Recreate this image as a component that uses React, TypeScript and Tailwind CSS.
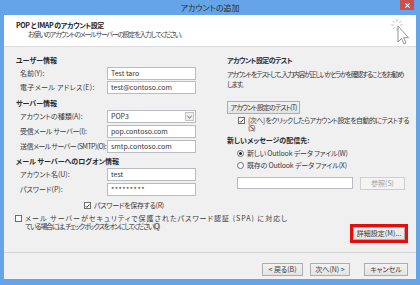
import React from "react";

function Check() {
  return (
    <svg viewBox="0 0 8 8" className="w-[6px] h-[6px]">
      <path d="M1 4.2 L3 6.2 L7 1.5" fill="none" stroke="#222" strokeWidth="1.4" />
    </svg>
  );
}

function CheckBox({ checked }: { checked?: boolean }) {
  return (
    <span className="w-[7px] h-[7px] border border-[#6d6d6d] bg-white flex items-center justify-center shrink-0">
      {checked && <Check />}
    </span>
  );
}

function Radio({ checked }: { checked?: boolean }) {
  return (
    <span className="w-[7px] h-[7px] rounded-full border border-[#6d6d6d] bg-white flex items-center justify-center shrink-0">
      {checked && <span className="w-[3px] h-[3px] rounded-full bg-[#222]" />}
    </span>
  );
}

function Input({ value, className = "" }: { value: string; className?: string }) {
  return (
    <div className={`w-[89px] h-[13px] border border-[#b9bbc0] bg-white pl-[3px] leading-[11px] text-[#333] ${className}`}>
      {value}
    </div>
  );
}

function Field({ label, value, labelClass = "" }: { label: string; value: string; labelClass?: string }) {
  return (
    <div className="flex h-[15px]">
      <span className={`ml-[16px] w-[87px] leading-[13px] whitespace-nowrap ${labelClass}`}>{label}</span>
      <Input value={value} />
    </div>
  );
}

function Button({ children, className = "" }: { children: React.ReactNode; className?: string }) {
  return (
    <div
      className={`h-[13px] border border-[#adadad] bg-gradient-to-b from-[#f2f2f2] to-[#e3e3e3] flex items-center justify-center leading-[11px] whitespace-nowrap ${className}`}
    >
      {children}
    </div>
  );
}

export default function App() {
  return (
    <div className="w-[420px] h-[285px] bg-[#66a4ea] flex flex-col overflow-hidden text-[7px] text-[#3a3a3a] font-['Noto_Sans_CJK_JP',sans-serif] [font-feature-settings:'palt']">
      {/* title bar */}
      <div className="h-[15px] relative flex items-center justify-center shrink-0">
        <span className="text-[8px] text-[#2b2b2b] leading-[15px]">アカウントの追加</span>
        <div className="absolute right-[6px] top-0 w-[14px] h-[10px] bg-[#c9504c] flex items-center justify-center">
          <svg viewBox="0 0 6 6" className="w-[5px] h-[5px]">
            <path d="M0.5 0.5 L5.5 5.5 M5.5 0.5 L0.5 5.5" stroke="#fff" strokeWidth="1.3" />
          </svg>
        </div>
      </div>

      <div className="mx-[4px] mb-[6px] flex-1 flex flex-col bg-[#f0f0f0] relative">
        {/* header */}
        <div className="h-[32px] shrink-0 bg-white border-b border-[#dedede] pt-[5px]">
          <div className="pl-[12px] leading-[10px] font-bold text-[#222] tracking-[-0.4px]">POP と IMAP のアカウント設定</div>
          <div className="pl-[24px] leading-[9px] text-[#444] tracking-[-1.3px]">
            お使いのアカウントのメール サーバーの設定を入力してください。
          </div>
        </div>

        {/* busy cursor */}
        <svg viewBox="0 0 20 28" className="absolute left-[386px] top-[3px] w-[20px] h-[28px]">
          <g stroke="#bdbdbd" strokeWidth="0.9">
            <path d="M7 1 L7 4 M7 10 L7 13 M1 7 L4 7 M10 7 L13 7 M2.8 2.8 L4.8 4.8 M11.2 2.8 L9.2 4.8 M2.8 11.2 L4.8 9.2" />
          </g>
          <path
            d="M8 8 L8 24 L11.5 20.5 L14 26 L16 25 L13.6 19.7 L18.5 19.7 Z"
            fill="#fff"
            stroke="#7a7a7a"
            strokeWidth="0.8"
          />
        </svg>

        {/* main */}
        <div className="flex-1 flex min-h-0">
          {/* left column */}
          <div className="w-[206px] shrink-0 pt-[7px] flex flex-col">
            <div className="ml-[12px] h-[13px] leading-[13px] font-bold text-[#2a2a2a]">ユーザー情報</div>
            <div className="flex h-[14px]">
              <span className="ml-[16px] w-[87px] leading-[13px]">名前(Y):</span>
              <Input value="Test taro" />
            </div>
            <div className="flex h-[16px]">
              <span className="ml-[16px] w-[87px] leading-[13px] whitespace-nowrap tracking-[0.3px]">電子メール アドレス(E):</span>
              <Input value="test@contoso.com" />
            </div>
            <div className="ml-[12px] h-[13px] leading-[13px] font-bold text-[#2a2a2a]">サーバー情報</div>
            <div className="flex h-[15px]">
              <span className="ml-[16px] w-[87px] leading-[13px] whitespace-nowrap">アカウントの種類(A):</span>
              <div className="w-[89px] h-[13px] border border-[#b9bbc0] bg-white pl-[3px] leading-[11px] text-[#333] flex justify-between">
                <span>POP3</span>
                <span className="w-[9px] h-[9px] mt-[1px] mr-[1px] border border-[#c3c3c3] bg-[#eeeeee] flex items-center justify-center">
                  <svg viewBox="0 0 6 4" className="w-[5px] h-[4px]">
                    <path d="M0.5 0.8 L3 3.2 L5.5 0.8" fill="none" stroke="#333" strokeWidth="1" />
                  </svg>
                </span>
              </div>
            </div>
            <Field label="受信メール サーバー(I):" value="pop.contoso.com" labelClass="tracking-[-0.3px]" />
            <Field label="送信メール サーバー (SMTP)(O):" value="smtp.contoso.com" labelClass="tracking-[-0.6px]" />
            <div className="ml-[12px] h-[13px] leading-[13px] font-bold text-[#2a2a2a] whitespace-nowrap">
              メール サーバーへのログオン情報
            </div>
            <Field label="アカウント名(U):" value="test" />
            <div className="flex h-[16px]">
              <span className="ml-[16px] w-[87px] leading-[13px]">パスワード(P):</span>
              <Input value="*********" className="tracking-[0.5px]" />
            </div>
            <div className="flex items-center h-[15px] pb-[2px] ml-[80px] gap-[3px]">
              <CheckBox checked />
              <span className="leading-[13px] tracking-[-0.3px]">パスワードを保存する(R)</span>
            </div>
            <div className="flex ml-[11px] gap-[3px]">
              <span className="mt-[1px]">
                <CheckBox />
              </span>
              <div className="leading-[8px] whitespace-nowrap">
                <div className="tracking-[1px]">メール サーバーがセキュリティで保護されたパスワード認証 (SPA) に対応し</div>
                <div className="tracking-[-1.3px]">ている場合には、チェック ボックスをオンにしてください(Q)</div>
              </div>
            </div>
          </div>

          {/* right column */}
          <div className="flex-1 min-w-0 pt-[7px] pl-[17px] pr-[8px] flex flex-col">
            <div className="h-[13px] leading-[13px] font-bold text-[#2a2a2a] tracking-[-0.6px]">アカウント設定のテスト</div>
            <div className="mt-[2px] leading-[10px] whitespace-nowrap tracking-[-1.35px]">
              アカウントをテストして、入力内容が正しいかどうかを確認することをお勧め
              <br />
              します。
            </div>
            <Button className="mt-[12px] w-[73px] tracking-[-0.9px]">アカウント設定のテスト(T)</Button>
            <div className="mt-[2px] ml-[11px] flex gap-[3px]">
              <span className="mt-[1px]">
                <CheckBox checked />
              </span>
              <span className="leading-[8px] whitespace-nowrap tracking-[-0.6px]">
                [次へ] をクリックしたらアカウント設定を自動的にテストする
                <br />
                (S)
              </span>
            </div>
            <div className="mt-[2px] h-[13px] leading-[13px] font-bold text-[#2a2a2a]">新しいメッセージの配信先:</div>
            <div className="ml-[10px] h-[12px] flex items-center gap-[3px]">
              <Radio checked />
              <span className="tracking-[-0.2px]">新しい Outlook データ ファイル(W)</span>
            </div>
            <div className="ml-[10px] h-[12px] flex items-center gap-[3px]">
              <Radio />
              <span className="tracking-[-0.2px]">既存の Outlook データ ファイル(X)</span>
            </div>
            <div className="mt-[6px] ml-[10px] flex gap-[7px]">
              <div className="w-[116px] h-[12px] border border-[#b9bbc0] bg-white" />
              <div className="w-[45px] h-[13px] border border-[#cfcfcf] bg-[#f4f4f4] text-[#a3a3a3] flex items-center justify-center">
                参照(S)
              </div>
            </div>
            <div className="mt-auto mb-[9px] self-end w-[58px] h-[19px] border-[3px] border-[#e30e0e] flex">
              <Button className="flex-1 h-auto">詳細設定(M)...</Button>
            </div>
          </div>
        </div>

        {/* footer */}
        <div className="h-[27px] shrink-0 border-t border-[#d3d3d3] flex justify-end items-start pt-[10px] pr-[8px]">
          <Button className="w-[41px]">&lt; 戻る(B)</Button>
          <Button className="w-[40px] ml-[7px] border-[#3d7ab8] from-[#eef5fc] to-[#dcebf9]">次へ(N) &gt;</Button>
          <Button className="w-[44px] ml-[14px]">キャンセル</Button>
        </div>
      </div>
    </div>
  );
}
